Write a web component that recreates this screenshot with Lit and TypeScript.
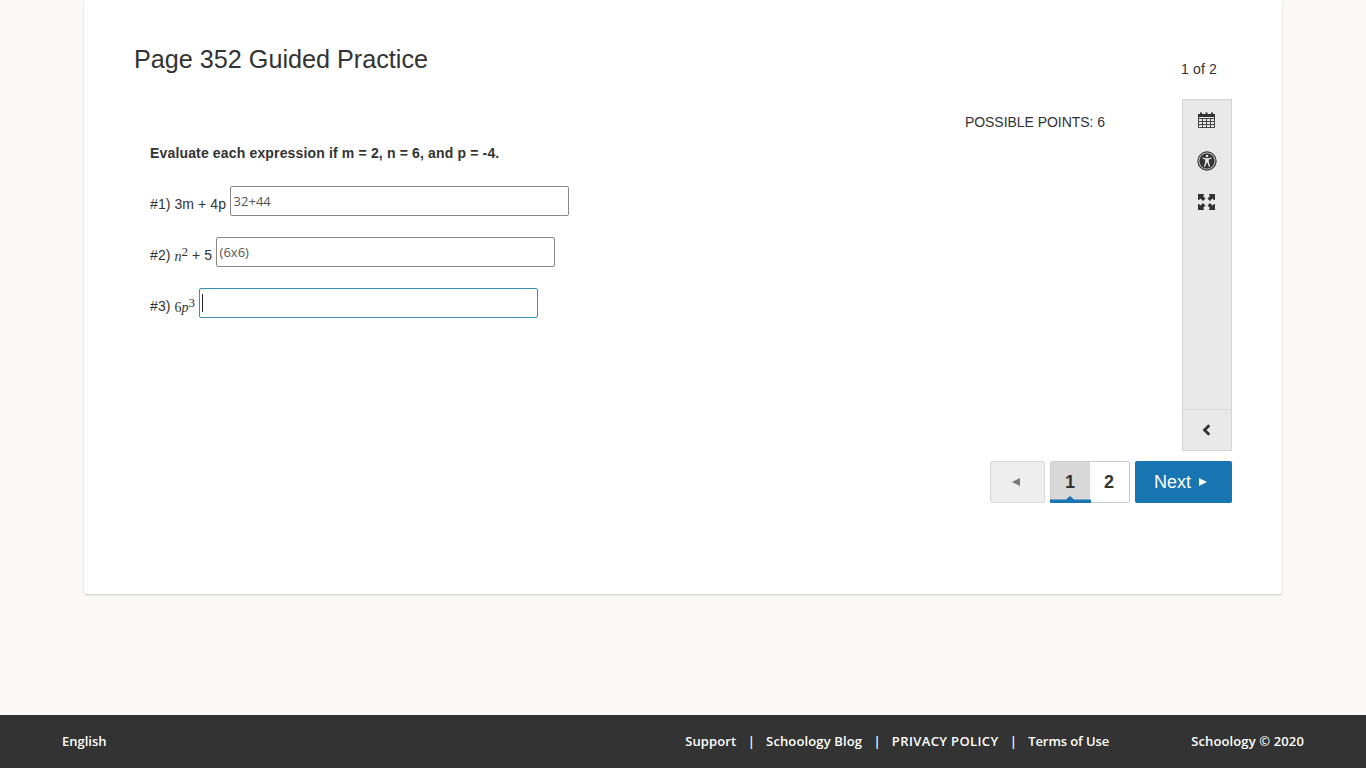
import { LitElement, css, html, svg } from 'lit';
import { customElement, property } from 'lit/decorators.js';

const calendarIcon = svg`
  <svg width="17" height="16" viewBox="0 0 17 16">
    <path fill="#333" d="M0 2h2V.500h2V2h3.500V.500h2V2H13V.500h2V2h2v3H0z"/>
    <path fill="none" stroke="#444" d="M.500 5v10.500h16V5M.500 6.500h16M.500 9.500h16M.500 12.500h16M4.500 6v9M8.500 6v9M12.500 6v9"/>
  </svg>`;

const accessIcon = svg`
  <svg width="20" height="20" viewBox="0 0 20 20">
    <circle cx="10" cy="10" r="9.100" fill="none" stroke="#333" stroke-width="1.200"/>
    <circle cx="10" cy="10" r="7.700" fill="#333"/>
    <circle cx="10" cy="5" r="1.300" fill="#e9e9e9"/>
    <path fill="#e9e9e9" d="M5.500 6.600L9 7.200h2l3.500-.6.200 1L11.800 8.500v2.500l1.300 4.600-1.100.4-1.700-4.500h-.6L8 16l-1.100-.4 1.300-4.600V8.500L5.300 7.600z"/>
  </svg>`;

const expandIcon = svg`
  <svg width="17" height="16" viewBox="0 0 17 16">
    <path fill="#333" d="M0 0h6v1L5 2v0l2.500 2.500L5 7 2.500 4.500 1 6H0zM17 0v6h-1l-1.500-1.500L12 7 9.500 4.500 12 2l-1-1V0zM0 16v-6h1l1.500 1.500L5 9l2.500 2.500L5 14l1 1v1zM17 16h-6v-1l1-1-2.500-2.500L12 9l2.500 2.500L16 10h1z"/>
  </svg>`;

const chevronIcon = svg`
  <svg width="9" height="12" viewBox="0 0 9 12">
    <path fill="none" stroke="#333" stroke-width="2.800" d="M7.300 1.200L2.500 6l4.800 4.800"/>
  </svg>`;

@customElement('answer-field')
export class AnswerField extends LitElement {
  static styles = css`
    :host {
      display: block;
    }

    .field {
      box-sizing: border-box;
      display: flex;
      align-items: center;
      width: 339px;
      height: 30px;
      padding: 0 2.500px;
      border: 1px solid #888;
      border-radius: 2px;
      background: #fff;
      color: #555;
      font: 13px 'Open Sans', sans-serif;
    }

    .active {
      border-color: #3991b3;
    }

    .caret {
      width: 1px;
      height: 18px;
      background: #222;
    }
  `;

  @property({ type: String })
  value = '';

  @property({ type: Boolean })
  active = false;

  protected render() {
    return html`
      <div class="field ${this.active ? 'active' : ''}">
        ${this.active ? html`<span class="caret"></span>` : this.value}
      </div>
    `;
  }
}

@customElement('app-root')
export class AppRoot extends LitElement {
  static styles = css`
    :host {
      display: flex;
      flex-direction: column;
      height: 768px;
      overflow: hidden;
      background: #faf9f7;
      color: #333;
      font: 14px/20px 'Liberation Sans', Arial, sans-serif;
    }

    .page {
      box-sizing: border-box;
      width: 1198px;
      height: 594px;
      margin: 0 0 121px 84px;
      padding: 0 50px;
      border-radius: 0 0 2px 2px;
      background: #fff;
      box-shadow: 0 1px 2px rgba(0, 0, 0, 0.2);
    }

    header {
      display: flex;
      justify-content: space-between;
      height: 99px;
    }

    h1 {
      margin: 44px 0 0;
      font-size: 25.200px;
      line-height: 30px;
      font-weight: 400;
    }

    .count {
      margin: 59px 15px 0 0;
      letter-spacing: 0.150px;
    }

    .body {
      display: flex;
      justify-content: space-between;
      height: 352px;
    }

    .question {
      width: 971px;
      padding: 13px 0 0 16px;
      box-sizing: border-box;
    }

    .points {
      text-align: right;
      letter-spacing: -0.040px;
    }

    .prompt {
      margin: 11px 0 23px;
      font-weight: 700;
      letter-spacing: 0.155px;
      white-space: pre;
    }

    .row {
      display: flex;
      height: 30px;
      margin-bottom: 21px;
    }

    .label {
      padding: 8px 4px 0 0;
      letter-spacing: 0.090px;
      white-space: pre;
    }

    .math {
      font-family: 'Liberation Serif', serif;
      font-size: 14px;
      line-height: 1;
      letter-spacing: 0;
      vertical-align: -1px;
    }

    .math sup {
      font-size: 13px;
      line-height: 0;
      vertical-align: 5px;
    }

    .tools {
      box-sizing: border-box;
      display: flex;
      flex-direction: column;
      width: 50px;
      border: 1px solid #d5d5d5;
      background: #e9e9e9;
    }

    .tool {
      box-sizing: border-box;
      display: flex;
      align-items: center;
      justify-content: center;
      height: 41px;
      padding: 0 1px 1px 0;
    }

    .collapse {
      margin-top: auto;
      padding-bottom: 0;
      border-top: 1px solid #d5d5d5;
    }

    nav {
      display: flex;
      justify-content: flex-end;
      gap: 5px;
      height: 42px;
      margin-top: 10px;
      font-size: 18px;
    }

    nav > div {
      box-sizing: border-box;
      display: flex;
      align-items: center;
      border-radius: 2px;
    }

    .prev {
      width: 55px;
      justify-content: center;
      padding-right: 3px;
      border: 1px solid #d9d9d9;
      background: #eee;
    }

    .pages {
      width: 80px;
      border: 1px solid #ccc;
      font-weight: 700;
    }

    .num {
      position: relative;
      box-sizing: border-box;
      display: flex;
      flex: 1;
      align-items: center;
      justify-content: center;
      height: 40px;
      padding-right: 1px;
    }

    .current {
      background: #d8d8d8;
    }

    .marker {
      position: absolute;
      left: -1px;
      bottom: -1px;
    }

    .next {
      width: 97px;
      gap: 8px;
      padding-left: 19px;
      background: #1875b2;
      color: #fff;
    }

    footer {
      box-sizing: border-box;
      display: flex;
      align-items: center;
      height: 53px;
      padding: 0 62px 2px;
      background: #333;
      color: #fff;
      font: 600 13px 'Open Sans', sans-serif;
      white-space: nowrap;
    }

    .links {
      display: flex;
      justify-content: space-between;
      width: 424px;
      margin: 0 82px 0 auto;
    }

    .support,
    .blog,
    .copyright {
      letter-spacing: 0.130px;
    }

    .privacy {
      letter-spacing: 0.370px;
    }

    .terms {
      letter-spacing: -0.100px;
    }
  `;

  protected render() {
    return html`
      <main class="page">
        <header>
          <h1>Page 352 Guided Practice</h1>
          <span class="count">1 of 2</span>
        </header>
        <div class="body">
          <section class="question">
            <div class="points">POSSIBLE POINTS: 6</div>
            <div class="prompt">Evaluate each expression if m = 2, n = 6, and p = -4.</div>
            <div class="row">
              <span class="label">#1) 3m + 4p</span>
              <answer-field value="32+44"></answer-field>
            </div>
            <div class="row">
              <span class="label">#2) <span class="math"><i>n</i><sup>2</sup></span> + 5</span>
              <answer-field value="(6x6)"></answer-field>
            </div>
            <div class="row">
              <span class="label">#3) <span class="math">6<i>p</i><sup>3</sup></span></span>
              <answer-field active></answer-field>
            </div>
          </section>
          <aside class="tools">
            <div class="tool">${calendarIcon}</div>
            <div class="tool">${accessIcon}</div>
            <div class="tool">${expandIcon}</div>
            <div class="tool collapse">${chevronIcon}</div>
          </aside>
        </div>
        <nav>
          <div class="prev">
            <svg width="8" height="8"><path fill="#777" d="M8 0v8L0 4z"/></svg>
          </div>
          <div class="pages">
            <span class="num current">1
              <svg class="marker" width="41" height="7"><path fill="#1875b2" d="M0 3.500h16L20 0l4 3.500h17V7H0z"/></svg>
            </span>
            <span class="num">2</span>
          </div>
          <div class="next">
            Next
            <svg width="8" height="8"><path fill="#fff" d="M0 0v8l8-4z"/></svg>
          </div>
        </nav>
      </main>
      <footer>
        <span>English</span>
        <div class="links">
          <span class="support">Support</span><span>|</span>
          <span class="blog">Schoology Blog</span><span>|</span>
          <span class="privacy">PRIVACY POLICY</span><span>|</span>
          <span class="terms">Terms of Use</span>
        </div>
        <span class="copyright">Schoology © 2020</span>
      </footer>
    `;
  }
}
